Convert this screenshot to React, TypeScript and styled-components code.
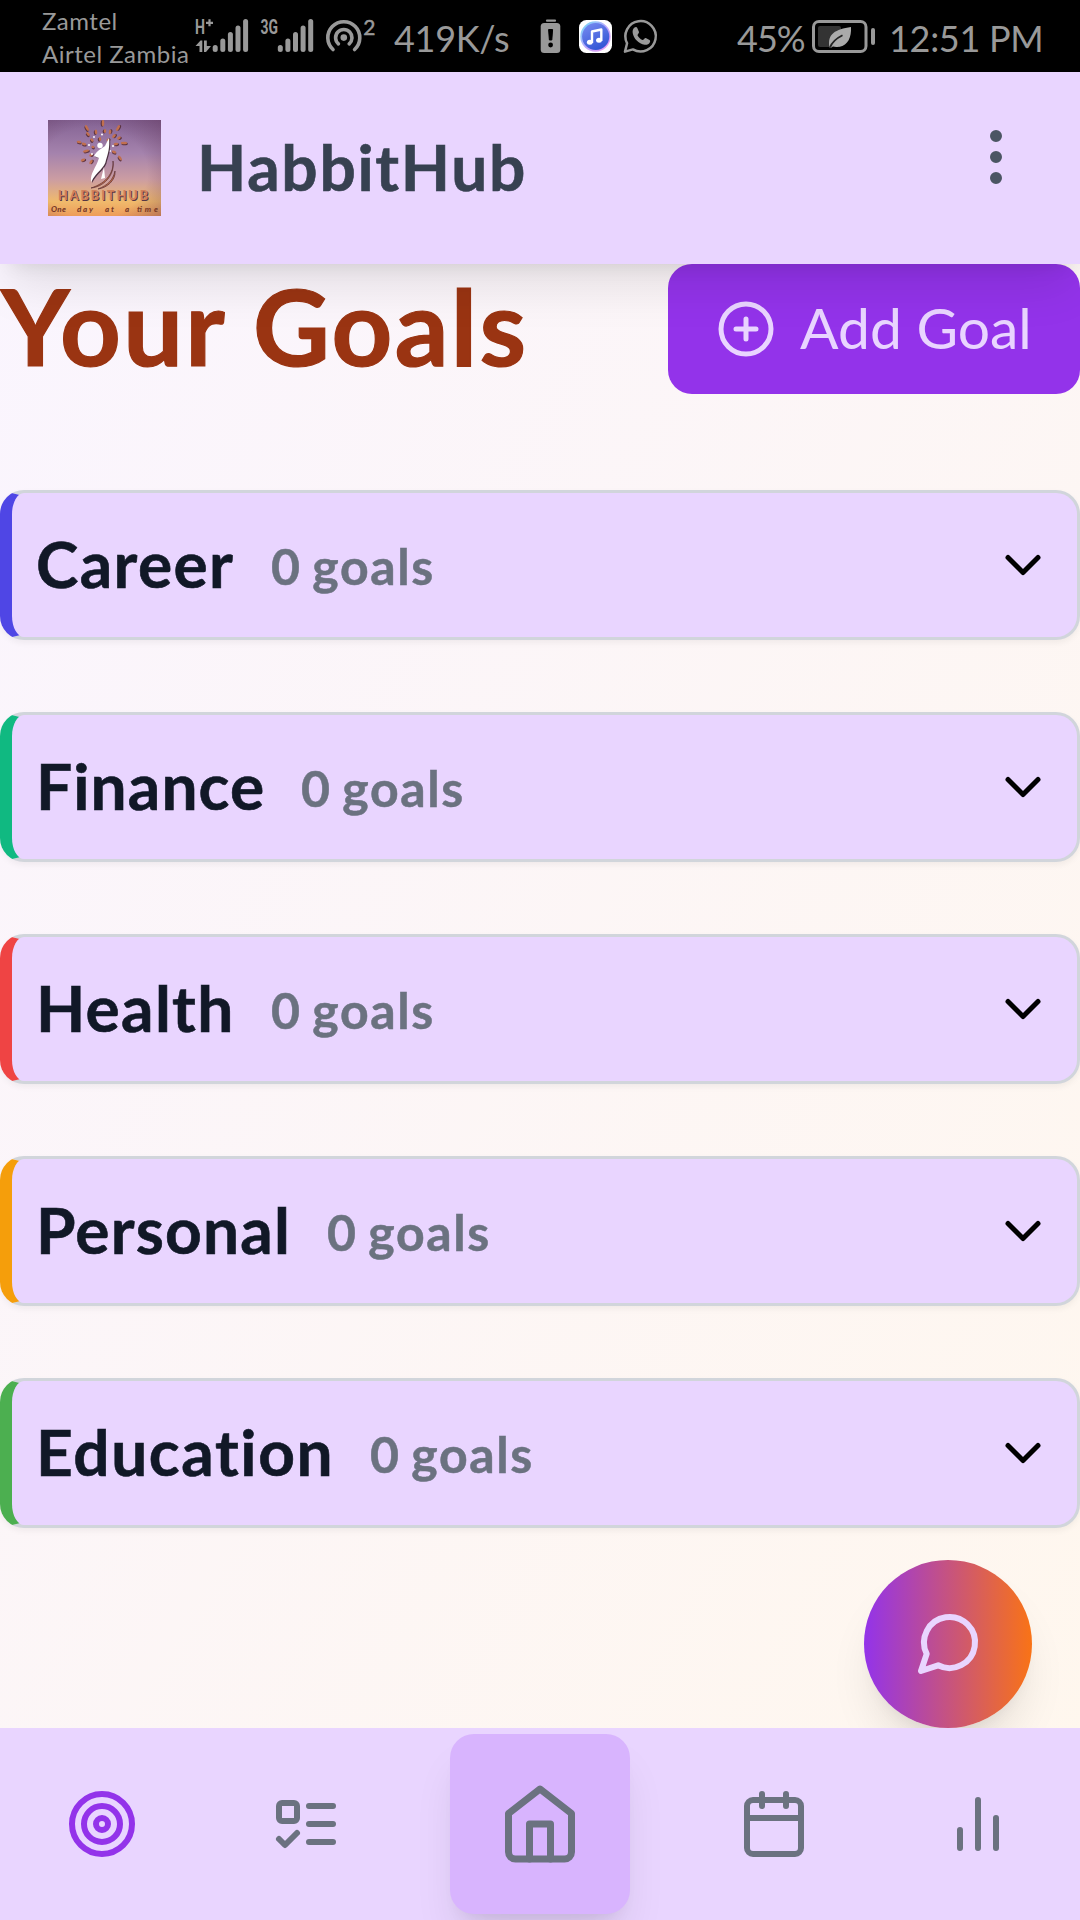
import React from "react";
import styled, { createGlobalStyle } from "styled-components";

const GlobalStyle = createGlobalStyle`
  *, *::before, *::after { box-sizing: border-box; }
  body {
    margin: 0;
    font-family: Lato, "Noto Sans", sans-serif;
    background: #000;
  }
  svg { display: block; flex: none; }
`;

const Screen = styled.div`
  width: 1080px;
  height: 1920px;
  display: flex;
  flex-direction: column;
  overflow: hidden;
`;

/* ---------- status bar ---------- */

const StatusBar = styled.div`
  height: 72px;
  flex: none;
  display: flex;
  align-items: flex-start;
  background: #000;
  color: #999;
  padding-left: 42px;
`;

const Carriers = styled.div`
  width: 153px;
  padding-top: 5px;
  font-size: 24px;
  line-height: 32.5px;
  letter-spacing: 0.5px;
  white-space: nowrap;
`;

const Carrier = styled.div``;

const StatusText = styled.div<{ $width: number; $spacing: number }>`
  width: ${(p) => p.$width}px;
  flex: none;
  font-size: 36px;
  line-height: 44px;
  padding-top: 16px;
  letter-spacing: ${(p) => p.$spacing}px;
  white-space: nowrap;
`;

const StatusIcons = styled.div<{ $width: number }>`
  width: ${(p) => p.$width}px;
  height: 72px;
  flex: none;
`;

/* ---------- header ---------- */

const Page = styled.div`
  flex: 1;
  display: flex;
  flex-direction: column;
  min-height: 0;
  background: linear-gradient(to bottom right, #faf5ff, #fff7ed);
`;

const Header = styled.header`
  height: 192px;
  flex: none;
  display: flex;
  align-items: center;
  padding: 0 48px;
  background: #e9d5ff;
  position: relative;
  z-index: 2;
  box-shadow: 0 30px 45px -9px rgba(0, 0, 0, 0.1), 0 12px 18px -12px rgba(0, 0, 0, 0.1);
`;

const Brand = styled.h1`
  margin: 0 auto 0 36px;
  padding-bottom: 3px;
  color: #374151;
  font-size: 64px;
  line-height: 84px;
  font-weight: 700;
  letter-spacing: 1.7px;
  -webkit-text-stroke: 0.6px currentColor;
`;

const MenuButton = styled.button`
  border: 0;
  padding: 0 0 22px;
  background: none;
  color: #4b5563;
`;

/* ---------- content ---------- */

const Content = styled.main`
  flex: 1;
  display: flex;
  flex-direction: column;
  min-height: 0;
`;

const TitleRow = styled.div`
  height: 130px;
  display: flex;
  align-items: center;
  justify-content: space-between;
  margin-bottom: 96px;
`;

const Title = styled.h2`
  margin: 0;
  padding: 0 0 8px 1px;
  color: #9a3412;
  font-size: 106px;
  line-height: 120px;
  font-weight: 700;
  letter-spacing: 2.3px;
  white-space: nowrap;
  -webkit-text-stroke: 1.2px currentColor;
`;

const AddButton = styled.button`
  width: 412px;
  height: 130px;
  display: flex;
  align-items: center;
  gap: 24px;
  padding: 0 0 0 48px;
  border: 0;
  border-radius: 24px;
  background: #9333ea;
  color: #e9d5ff;
  font-family: inherit;
  font-size: 57px;
  white-space: nowrap;
`;

const AddLabel = styled.span`
  padding-bottom: 5px;
`;

const GoalList = styled.div`
  display: flex;
  flex-direction: column;
  gap: 72px;
`;

const GoalCard = styled.section<{ $accent: string }>`
  height: 150px;
  display: flex;
  align-items: center;
  padding: 0 24px;
  border: 3px solid #d1d5db;
  border-left: 12px solid ${(p) => p.$accent};
  border-radius: 24px;
  background: #e9d5ff;
  box-shadow: 0 3px 6px rgba(0, 0, 0, 0.05);
`;

const GoalName = styled.h3<{ $width: number; $spacing: number }>`
  width: ${(p) => p.$width}px;
  margin: 0 36px 0 0;
  padding-bottom: 2px;
  color: #111827;
  font-size: 64px;
  line-height: 84px;
  font-weight: 700;
  letter-spacing: ${(p) => p.$spacing}px;
  white-space: nowrap;
  -webkit-text-stroke: 0.6px currentColor;
`;

const GoalCount = styled.span`
  margin-right: auto;
  padding-top: 2px;
  color: #6b7280;
  font-size: 50px;
  line-height: 72px;
  font-weight: 700;
  letter-spacing: 1.6px;
  word-spacing: -3px;
  -webkit-text-stroke: 0.5px currentColor;
`;

const FabRow = styled.div`
  flex: 1;
  display: flex;
  justify-content: flex-end;
  align-items: flex-end;
  padding-right: 48px;
`;

const ChatButton = styled.button`
  width: 168px;
  height: 168px;
  display: flex;
  align-items: center;
  justify-content: center;
  padding: 0;
  border: 0;
  border-radius: 50%;
  color: #e9d5ff;
  background: linear-gradient(to right, #9333ea, #f97316);
  box-shadow: 0 30px 45px -9px rgba(0, 0, 0, 0.1), 0 12px 18px -12px rgba(0, 0, 0, 0.1);
`;

/* ---------- bottom navigation ---------- */

const BottomNav = styled.nav`
  height: 192px;
  flex: none;
  display: flex;
  align-items: center;
  justify-content: space-around;
  background: #e9d5ff;
  position: relative;
  overflow: hidden;
`;

const NavItem = styled.button<{ $active?: boolean }>`
  border: 0;
  padding: 24px;
  background: none;
  color: ${(p) => (p.$active ? "#9333ea" : "#6b7280")};
`;

const HomeItem = styled(NavItem)`
  padding: 48px;
  border-radius: 24px;
  background: #d8b4fe;
  box-shadow: 0 30px 45px -9px rgba(0, 0, 0, 0.1), 0 12px 18px -12px rgba(0, 0, 0, 0.1);
`;

/* ---------- drawings ---------- */

type IconProps = { size: number; color?: string; children: React.ReactNode };

const Icon = ({ size, color = "currentColor", children }: IconProps) => (
  <svg
    width={size}
    height={size}
    viewBox="0 0 24 24"
    fill="none"
    stroke={color}
    strokeWidth={2}
    strokeLinecap="round"
    strokeLinejoin="round"
  >
    {children}
  </svg>
);

const SignalBars = ({ x }: { x: number }) => (
  <g stroke="#999" strokeWidth={5} strokeLinecap="round">
    {[47.5, 41, 34.5, 28, 21.5].map((top, i) => (
      <line key={top} x1={x + i * 7.6} x2={x + i * 7.6} y1={top} y2={49.5} />
    ))}
  </g>
);

const NetworkIcons = () => (
  <svg width="190" height="72" viewBox="195 0 190 72" fill="#999">
    <text x="195" y="34" fontFamily="Roboto" fontSize="20.5" fontWeight="700" textLength="10" lengthAdjust="spacingAndGlyphs">H</text>
    <path d="M206 22.8h7M209.5 19.3v7" stroke="#999" strokeWidth="2.2" />
    <path d="M195.5 46l5-5.5h1.8V52h-2.8v-6zM204 40.5h2.8v5.5h4.2l-5 6H204z" />
    <SignalBars x={215.2} />
    <text x="260.5" y="34" fontFamily="Roboto" fontSize="20.5" fontWeight="700" textLength="17.5" lengthAdjust="spacingAndGlyphs">3G</text>
    <SignalBars x={280.3} />
    <g fill="none" stroke="#999" strokeWidth="3.6" strokeLinecap="round">
      <path d="M333 49.5a16 16 0 1 1 21.6 0" />
      <path d="M338.4 43.8a8.2 8.2 0 1 1 10.8 0" />
    </g>
    <circle cx="343.8" cy="37.6" r="3.3" />
    <text x="363.2" y="34.5" fontFamily="Lato" fontSize="21" stroke="#999" strokeWidth="0.5">2</text>
  </svg>
);

const NotificationIcons = () => (
  <svg width="120" height="72" viewBox="540 0 120 72">
    <defs>
      <linearGradient id="music" x1="0" y1="0" x2="0.5" y2="1">
        <stop offset="0" stopColor="#7b8df2" />
        <stop offset="1" stopColor="#3558d6" />
      </linearGradient>
      <linearGradient id="halo" x1="0" y1="0" x2="1" y2="1">
        <stop offset="0" stopColor="#6ee0f5" />
        <stop offset="0.5" stopColor="#b9a6ff" />
        <stop offset="1" stopColor="#f29af0" />
      </linearGradient>
    </defs>
    <path d="M547 20.7h8" stroke="#999" strokeWidth="2.2" strokeLinecap="round" />
    <rect x="540.7" y="23" width="19.6" height="30" rx="3.5" fill="#999" />
    <path d="M548.6 29.5h4l-.8 10.5h-2.4z" fill="#000" stroke="#000" strokeLinejoin="round" />
    <circle cx="550.6" cy="45" r="2.4" fill="#000" />
    <rect x="579" y="20" width="33" height="33" rx="7.5" fill="#fff" />
    <circle cx="595.5" cy="36.5" r="15.2" fill="url(#halo)" />
    <circle cx="595.7" cy="36.5" r="13.6" fill="url(#music)" />
    <path d="M592 43V31.5l9.3-2V41" fill="none" stroke="#fff" strokeWidth="2.4" strokeLinejoin="round" />
    <ellipse cx="589.8" cy="42.3" rx="2.9" ry="2.5" fill="#fff" />
    <ellipse cx="599" cy="40.2" rx="2.9" ry="2.5" fill="#fff" />
    <path d="M625 51.6l2.1-8.3a15.2 15.2 0 1 1 5.8 6.1z" fill="none" stroke="#999" strokeWidth="2.5" strokeLinejoin="round" />
    <path
      d="M634.5 27.6c1-.9 2.4-.7 2.8.3l1.7 4c.4 1-1.8 2.6-1.5 3.3 1 2.2 2.8 3.8 5 4.8.8.4 2.3-2.3 3.3-1.9l3.7 1.8c.8.4.8 1.4.4 2.3-.9 2-3.2 2.9-5.2 2.6-6.2-1.1-11.1-6.2-12-11.8-.3-2.1.3-4.2 1.8-5.4z"
      fill="#999"
    />
  </svg>
);

const BatteryIcon = () => (
  <svg width="66" height="72" viewBox="811 0 66 72">
    <rect x="813.5" y="21.5" width="52.5" height="30" rx="5.5" fill="none" stroke="#999" strokeWidth="3" />
    <rect x="818" y="26" width="23" height="21" rx="2" fill="#333" />
    <path d="M829.5 47.5c-2.5-14 6-18 21.5-20.5.6 10-3 18.5-11.5 19.8-3 .5-5-.3-6.5-.6l-1.5 1.3z" fill="#aaa" />
    <path d="M830 47.5c2-6 6-9 12.5-12.3" fill="none" stroke="#222" strokeWidth="1.8" />
    <path d="M873 30v13" stroke="#999" strokeWidth="4" strokeLinecap="round" />
  </svg>
);

/* x, y, rotation and length of each petal around the figure */
const petals: [number, number, number, number][] = [
  [55, 3, 90, 4], [39, 8, 60, 4], [70, 8, -60, 4], [40, 14, 48, 3], [48, 12, 85, 3],
  [62, 12, -80, 3], [66, 16, -50, 3], [31, 22, 12, 3], [36, 24, 15, 3], [44, 20, 50, 2.5],
  [52, 19, 85, 2.5], [76, 23, 0, 4], [68, 24, -10, 3], [38, 31, -15, 4], [35, 40, -25, 3],
  [43, 42, -55, 3], [66, 32, 25, 3], [72, 38, 55, 3.5], [45, 27, 20, 2], [60, 20, -60, 2],
  [43, 35, -40, 2.5], [71, 18, -35, 2.5], [57, 11, 90, 2.5],
];

const caption: [string, number, number][] = [
  ["One", 3, 15], ["day", 29, 16], ["at", 57, 9], ["a", 77, 5], ["time", 89, 21],
];

const Logo = () => (
  <svg width="113" height="96" viewBox="0 0 113 96">
    <defs>
      <linearGradient id="sky" x1="0" y1="0" x2="0" y2="1">
        <stop offset="0" stopColor="#846394" />
        <stop offset="0.35" stopColor="#a583ad" />
        <stop offset="0.62" stopColor="#cc9da2" />
        <stop offset="0.85" stopColor="#f0ba6c" />
        <stop offset="1" stopColor="#ee9c59" />
      </linearGradient>
      <radialGradient id="shade" cx="0.4" cy="0.55" r="0.8">
        <stop offset="0.6" stopColor="#5a2d50" stopOpacity="0" />
        <stop offset="1" stopColor="#5a2d50" stopOpacity="0.4" />
      </radialGradient>
    </defs>
    <rect width="113" height="96" fill="url(#sky)" />
    <rect width="113" height="96" fill="url(#shade)" />
    {petals.map(([x, y, angle, r], i) => (
      <g key={i} transform={`translate(${x} ${y}) rotate(${angle})`}>
        <ellipse cx="0.6" cy="0.9" rx={r * 0.8} ry="1.4" fill="#5b3340" />
        <ellipse rx={r * 0.8} ry="1.25" fill="#c1704f" />
      </g>
    ))}
    <g fill="#fff">
      <circle cx="54" cy="14.5" r="1" />
      <circle cx="41" cy="25" r="1" />
      <circle cx="46" cy="17" r="0.9" />
      <circle cx="65" cy="26" r="1" />
      <circle cx="62" cy="31" r="0.9" />
      <circle cx="44" cy="34" r="1" />
    </g>
    <path
      transform="translate(1 1)"
      fill="#4a3040"
      d="M61 18c1 9-1 16-3 22-1 8-9 11-15 22 0-10 7-15 8-25l-5-1c4-5 9-8 12-10z"
    />
    <g fill="#fff">
      <circle cx="52" cy="25.5" r="2.7" />
      <path d="M61 18c1 9-1 16-3 22-1 8-9 11-15 22-1-9 5-14 8-24l-5-2c3-6 9-8 11-10z" />
      <path d="M56 47l1 11-4 1z" />
    </g>
    <path d="M65 41c1 11-6 22-22 27 12-1 24-12 22-27zM67 51c-2 9-7 14-17 18 9-1 18-9 17-18z" fill="#c66f45" stroke="#5a3038" strokeWidth="0.7" />
    <g fontFamily="Lato" fontWeight="900" fontSize="12.5">
      <text x="11" y="81" textLength="90" fill="#573745">HABBITHUB</text>
      <text x="10" y="80" textLength="90" fill="#d1805a">HABBITHUB</text>
    </g>
    <g fontFamily="Lato" fontStyle="italic" fontWeight="900" fontSize="8" fill="#7a3a28">
      {caption.map(([word, x, width]) => (
        <text key={word} x={x} y="91.5" textLength={width}>{word}</text>
      ))}
    </g>
  </svg>
);

/* ---------- data ---------- */

const goals = [
  { name: "Career", accent: "#4f46e5", width: 199, spacing: 1.4 },
  { name: "Finance", accent: "#10b981", width: 229, spacing: 1.1 },
  { name: "Health", accent: "#ef4444", width: 199, spacing: 1.3 },
  { name: "Personal", accent: "#f59e0b", width: 255, spacing: 1.2 },
  { name: "Education", accent: "#4caf50", width: 298, spacing: 1.6 },
];

export default function App() {
  return (
    <Screen>
      <GlobalStyle />
      <StatusBar>
        <Carriers>
          <Carrier>Zamtel</Carrier>
          <Carrier>Airtel Zambia</Carrier>
        </Carriers>
        <StatusIcons $width={199}><NetworkIcons /></StatusIcons>
        <StatusText $width={146} $spacing={-0.3}>419K/s</StatusText>
        <StatusIcons $width={197}><NotificationIcons /></StatusIcons>
        <StatusText $width={74} $spacing={-1}>45%</StatusText>
        <StatusIcons $width={78}><BatteryIcon /></StatusIcons>
        <StatusText $width={160} $spacing={-0.3}>12:51 PM</StatusText>
      </StatusBar>
      <Page>
        <Header>
          <Logo />
          <Brand>HabbitHub</Brand>
          <MenuButton aria-label="Menu">
            <Icon size={72}>
              <circle cx="12" cy="5" r="1" />
              <circle cx="12" cy="12" r="1" />
              <circle cx="12" cy="19" r="1" />
            </Icon>
          </MenuButton>
        </Header>
        <Content>
          <TitleRow>
            <Title>Your Goals</Title>
            <AddButton>
              <Icon size={60}>
                <circle cx="12" cy="12" r="10" />
                <path d="M8 12h8M12 8v8" />
              </Icon>
              <AddLabel>Add Goal</AddLabel>
            </AddButton>
          </TitleRow>
          <GoalList>
            {goals.map((goal) => (
              <GoalCard key={goal.name} $accent={goal.accent}>
                <GoalName $width={goal.width} $spacing={goal.spacing}>{goal.name}</GoalName>
                <GoalCount>0 goals</GoalCount>
                <Icon size={60} color="#000"><path d="m6 9 6 6 6-6" /></Icon>
              </GoalCard>
            ))}
          </GoalList>
          <FabRow>
            <ChatButton aria-label="Chat">
              <Icon size={72}><path d="m3 21 1.9-5.7a8.5 8.5 0 1 1 3.8 3.8z" /></Icon>
            </ChatButton>
          </FabRow>
        </Content>
        <BottomNav>
          <NavItem $active aria-label="Goals">
            <Icon size={72}>
              <circle cx="12" cy="12" r="10" />
              <circle cx="12" cy="12" r="6" />
              <circle cx="12" cy="12" r="2" />
            </Icon>
          </NavItem>
          <NavItem aria-label="Tasks">
            <Icon size={72}>
              <rect x="3" y="5" width="6" height="6" rx="1" />
              <path d="m3 17 2 2 4-4M13 6h8M13 12h8M13 18h8" />
            </Icon>
          </NavItem>
          <HomeItem aria-label="Home">
            <Icon size={84}>
              <path d="m3 9 9-7 9 7v11a2 2 0 0 1-2 2H5a2 2 0 0 1-2-2z" />
              <path d="M9 22V12h6v10" />
            </Icon>
          </HomeItem>
          <NavItem aria-label="Calendar">
            <Icon size={72}>
              <rect x="3" y="4" width="18" height="18" rx="2" />
              <path d="M8 2v4M16 2v4M3 10h18" />
            </Icon>
          </NavItem>
          <NavItem aria-label="Statistics">
            <Icon size={72}>
              <path d="M18 20V10M12 20V4M6 20v-6" />
            </Icon>
          </NavItem>
        </BottomNav>
      </Page>
    </Screen>
  );
}
